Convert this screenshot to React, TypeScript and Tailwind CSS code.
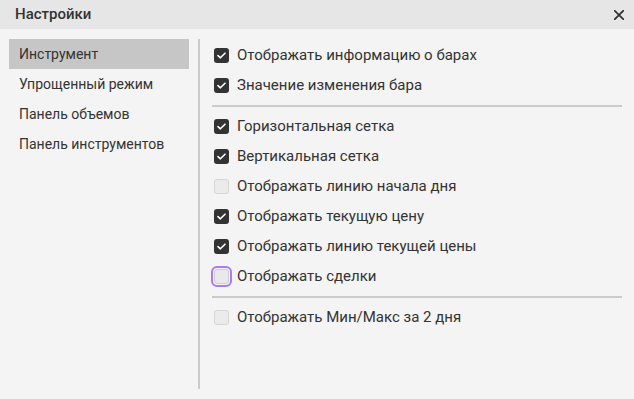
const menuItems = ["Инструмент", "Упрощенный режим", "Панель объемов", "Панель инструментов"];

type Option = { label: string; checked: boolean; focused?: boolean };

const groups: Option[][] = [
  [
    { label: "Отображать информацию о барах", checked: true },
    { label: "Значение изменения бара", checked: true },
  ],
  [
    { label: "Горизонтальная сетка", checked: true },
    { label: "Вертикальная сетка", checked: true },
    { label: "Отображать линию начала дня", checked: false },
    { label: "Отображать текущую цену", checked: true },
    { label: "Отображать линию текущей цены", checked: true },
    { label: "Отображать сделки", checked: false, focused: true },
  ],
  [{ label: "Отображать Мин/Макс за 2 дня", checked: false }],
];

const CheckBox = ({ checked, focused }: { checked: boolean; focused?: boolean }) => {
  if (checked) {
    return (
      <span className="flex h-[15px] w-[15px] shrink-0 items-center justify-center rounded-[3px] bg-[#333333]">
        <svg width="9" height="7" viewBox="0 0 9 7" fill="none">
          <path d="M1 3.6 L3.4 5.8 L8 1.2" stroke="#ffffff" strokeWidth="1.6" strokeLinecap="round" strokeLinejoin="round" />
        </svg>
      </span>
    );
  }
  return (
    <span
      className={
        focused
          ? "h-[15px] w-[15px] shrink-0 rounded-[3px] border border-[#cfcfcf] bg-[#e9e9e9] outline-2 outline-offset-[1px] outline-[#a77bf8]"
          : "h-[15px] w-[15px] shrink-0 rounded-[3px] border border-[#d6d6d6] bg-[#ebebeb]"
      }
    />
  );
};

export default function App() {
  return (
    <div className="flex h-[399px] w-[634px] flex-col bg-[#f4f4f4] font-['Roboto',sans-serif] text-[#333333]">
      <div className="flex h-[29px] shrink-0 items-center justify-between bg-[#e6e6e6] pl-[15px] pr-[10px]">
        <span className="text-[15px] font-medium">Настройки</span>
        <svg width="10" height="10" viewBox="0 0 10 10" fill="none">
          <path d="M0.8 0.8 L9.2 9.2 M9.2 0.8 L0.8 9.2" stroke="#333333" strokeWidth="1.8" strokeLinecap="square" />
        </svg>
      </div>
      <div className="flex flex-1 py-[10px] pl-[9px] pr-[12px]">
        <div className="flex w-[180px] flex-col">
          {menuItems.map((item, i) => (
            <div
              key={item}
              className={
                i === 0
                  ? "flex h-[30px] items-center bg-[#c6c6c6] px-[10px] text-[14px]"
                  : "flex h-[30px] items-center px-[10px] text-[14px]"
              }
            >
              {item}
            </div>
          ))}
        </div>
        <div className="ml-[9px] w-[2px] bg-[#cbcbcb]" />
        <div className="ml-[12px] flex flex-1 flex-col pt-[1.5px]">
          {groups.map((group, gi) => (
            <div key={gi}>
              {gi > 0 && <div className="my-[4.5px] h-[2px] bg-[#cbcbcb]" />}
              {group.map((opt) => (
                <div key={opt.label} className="flex h-[30px] items-center gap-[8px] pl-[2px] text-[15px]">
                  <CheckBox checked={opt.checked} focused={opt.focused} />
                  <span>{opt.label}</span>
                </div>
              ))}
            </div>
          ))}
        </div>
      </div>
    </div>
  );
}
